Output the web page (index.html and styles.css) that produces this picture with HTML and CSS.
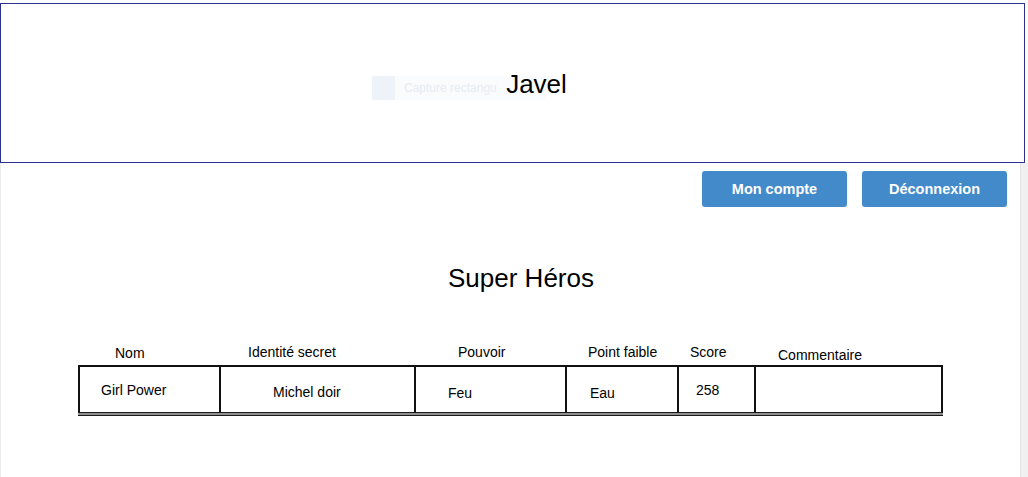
FILE: index.html
```html
<!DOCTYPE html>
<html lang="fr">
<head>
<meta charset="utf-8">
<title>Javel - Super Héros</title>
<link rel="stylesheet" href="styles.css">
</head>
<body>
  <header class="banner">
    <div class="ghost"><span class="ghost-icon"></span><span class="ghost-text">Capture rectangu</span></div>
    <h1 class="brand">Javel</h1>
  </header>
  <div class="page">
    <main class="main">
      <nav class="actions">
        <button class="btn">Mon compte</button>
        <button class="btn">Déconnexion</button>
      </nav>
      <h2 class="title">Super Héros</h2>
      <section class="heroes">
        <div class="labels">
          <span class="lbl l1">Nom</span>
          <span class="lbl l2">Identité secret</span>
          <span class="lbl l3">Pouvoir</span>
          <span class="lbl l4">Point faible</span>
          <span class="lbl l5">Score</span>
          <span class="lbl l6">Commentaire</span>
        </div>
        <div class="row">
          <div class="cell c1">Girl Power</div>
          <div class="cell c2">Michel doir</div>
          <div class="cell c3">Feu</div>
          <div class="cell c4">Eau</div>
          <div class="cell c5">258</div>
          <div class="cell c6"></div>
        </div>
      </section>
    </main>
    <div class="gutter"></div>
  </div>
</body>
</html>
```
FILE: styles.css
```css
* { box-sizing: border-box; }
html, body { margin: 0; padding: 0; background: #ffffff; }
body {
  font-family: "Liberation Sans", Arial, sans-serif;
  color: #000;
  width: 1028px;
  height: 477px;
  overflow: hidden;
  padding-top: 3px;
}

.banner {
  position: relative;
  width: 1025px;
  height: 160px;
  border: 1px solid #2c3290;
  display: flex;
  align-items: center;
  justify-content: center;
  padding-left: 48px;
  padding-top: 1px;
}
.brand {
  margin: 0;
  font-size: 26px;
  font-weight: normal;
  line-height: 30px;
  position: relative;
}
.ghost {
  position: absolute;
  left: 371px;
  top: 72px;
  width: 174px;
  height: 24px;
  background: #f9fbfd;
  display: flex;
  align-items: center;
  gap: 9px;
}
.ghost-icon {
  flex: none;
  width: 23px;
  height: 24px;
  background: #eef3f9;
}
.ghost-text {
  white-space: nowrap;
  font-size: 12px;
  color: #e7ecf2;
}

.page {
  display: flex;
  height: 314px;
}
.main {
  flex: 1;
  border-left: 1px solid #ececec;
}
.gutter {
  width: 8px;
  background: #f0f0f0;
  border-left: 1px solid #e4e4e4;
}

.actions {
  display: flex;
  justify-content: flex-end;
  gap: 15px;
  padding-right: 13px;
  margin-top: 8px;
}
.btn {
  width: 145px;
  height: 36px;
  border: none;
  border-radius: 3px;
  background: #428aca;
  color: #fff;
  font-family: "Liberation Sans", Arial, sans-serif;
  font-weight: bold;
  font-size: 14.5px;
  padding: 0;
}

.title {
  margin: 56px 0 0 0;
  padding-left: 21px;
  text-align: center;
  font-size: 26px;
  font-weight: normal;
  line-height: 30px;
}

.heroes {
  margin: 52px 0 0 77px;
  width: 865px;
  font-size: 14px;
}
.labels, .row {
  display: grid;
  grid-template-columns: 139px 195px 151px 112px 77px 1fr;
}
.labels {
  height: 20px;
  line-height: 15px;
  padding-left: 2px;
}
.lbl { display: block; white-space: nowrap; }
.l1 { padding-left: 35px; padding-top: 1px; }
.l2 { padding-left: 29px; }
.l3 { padding-left: 44px; }
.l4 { padding-left: 23px; }
.l5 { padding-left: 13px; }
.l6 { padding-left: 24px; padding-top: 3px; }

.row {
  height: 51px;
  border: 2px solid #111;
  border-bottom: none;
  position: relative;
}
.row::after {
  content: "";
  position: absolute;
  left: -2px;
  right: -2px;
  bottom: 0;
  height: 4px;
  background: linear-gradient(#1a1a1a 0 1px, #8f8f8f 1px 3px, #1a1a1a 3px 4px);
}
.cell {
  border-left: 2px solid #111;
  line-height: 16px;
  padding-top: 16px;
  white-space: nowrap;
}
.c1 { border-left: none; padding-left: 21px; padding-top: 15px; }
.c2 { padding-left: 52px; padding-top: 17px; }
.c3 { padding-left: 32px; padding-top: 18px; }
.c4 { padding-left: 23px; padding-top: 18px; }
.c5 { padding-left: 17px; padding-top: 15px; }
```
